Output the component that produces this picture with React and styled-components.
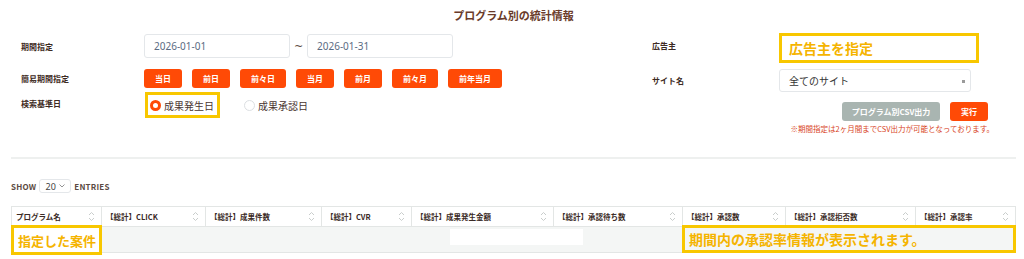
import styled, { createGlobalStyle } from "styled-components";

const GlobalStyle = createGlobalStyle`
  html, body {
    margin: 0;
    padding: 0;
    background: #ffffff;
  }
  body {
    font-family: "Noto Sans CJK JP", "Noto Sans", sans-serif;
    color: #3d2a22;
  }
`;

const ORANGE = "#ff4a06";
const YELLOW = "#f8c700";
const YELLOW_TEXT = "#f5b400";

const Page = styled.div`
  width: 1024px;
  height: 259px;
  box-sizing: border-box;
  padding: 7px 8px 0 11px;
  overflow: hidden;
`;

const Title = styled.h1`
  margin: 0;
  font-size: 11px;
  line-height: 16px;
  font-weight: 700;
  text-align: center;
  color: #6a3b2a;
`;

const Form = styled.div`
  display: flex;
  margin-top: 10px;
`;

const LeftPanel = styled.div`
  width: 641px;
  box-sizing: border-box;
  padding-left: 10px;
  display: flex;
  flex-direction: column;
`;

const RightPanel = styled.div`
  flex: 1;
  display: flex;
  flex-direction: column;
`;

const Row = styled.div`
  display: grid;
  grid-template-columns: ${(p) => p.$label}px 1fr;
  align-items: center;
  margin-top: ${(p) => p.$mt || 0}px;
`;

const Label = styled.span`
  font-size: 8px;
  font-weight: 700;
  color: #3d2a22;
  margin-top: ${(p) => p.$nudge || 0}px;
`;

const DateRange = styled.div`
  display: flex;
  align-items: center;
  gap: 4px;
`;

const DateInput = styled.div`
  width: 146px;
  height: 24px;
  box-sizing: border-box;
  border: 1px solid #e4e7ea;
  border-radius: 3px;
  padding-left: 9px;
  display: flex;
  align-items: center;
  font-family: "Noto Sans", sans-serif;
  font-size: 10px;
  color: #5b6b82;
`;

const Tilde = styled.span`
  width: 9px;
  text-align: center;
  font-family: "DejaVu Sans", sans-serif;
  font-size: 11px;
  color: #5a4a40;
`;

const QuickButtons = styled.div`
  display: flex;
  gap: 10px;
`;

const OrangeButton = styled.button`
  all: unset;
  box-sizing: border-box;
  height: 19px;
  padding: 0 ${(p) => p.$px || 11}px;
  background: ${ORANGE};
  border-radius: 3px;
  color: #ffffff;
  font-size: 8px;
  font-weight: 700;
  display: flex;
  align-items: center;
  justify-content: center;
  white-space: nowrap;
`;

const RadioGroup = styled.div`
  display: flex;
  align-items: center;
  gap: 24px;
  margin-left: 1px;
`;

const Highlight = styled.div`
  box-sizing: border-box;
  border: 3px solid ${YELLOW};
  background: #ffffff;
`;

const RadioBox = styled(Highlight)`
  height: 26px;
  display: flex;
  align-items: center;
  padding: 0 3px 0 2px;
`;

const RadioItem = styled.label`
  display: flex;
  align-items: center;
  gap: 3px;
  font-size: 10px;
  color: #4a3530;
  white-space: nowrap;
`;

const RadioDot = styled.span`
  width: 11px;
  height: 11px;
  flex: none;
  box-sizing: border-box;
  border-radius: 50%;
  border: ${(p) => (p.$checked ? `3px solid ${ORANGE}` : "1px solid #dcdfe2")};
  background: #ffffff;
`;

const AdvertiserBox = styled(Highlight)`
  width: 200px;
  height: 30px;
  display: flex;
  align-items: center;
  padding-left: 7px;
  font-size: 14px;
  font-weight: 700;
  color: ${YELLOW_TEXT};
`;

const Select = styled.div`
  width: 192px;
  height: 23px;
  box-sizing: border-box;
  border: 1px solid #e4e7ea;
  border-radius: 3px;
  display: flex;
  align-items: center;
  justify-content: space-between;
  padding: 0 5px 0 9px;
  font-size: 10px;
  color: #333333;
`;

const TinyArrow = styled.span`
  width: 3px;
  height: 3px;
  background: #9a9a9a;
  margin-top: 1px;
`;

const Actions = styled.div`
  display: flex;
  justify-content: flex-end;
  gap: 10px;
  margin-top: 10px;
  padding-right: 28px;
`;

const GrayButton = styled(OrangeButton)`
  background: #a9b5b1;
  width: 98px;
  padding: 0;
`;

const Note = styled.p`
  margin: 3px 0 0;
  padding-right: 22px;
  text-align: right;
  font-size: 7.5px;
  line-height: 10px;
  color: #d8431c;
`;

const Divider = styled.hr`
  border: 0;
  height: 2px;
  background: #eef0ef;
  margin: 23px 0 0;
`;

const ShowRow = styled.div`
  display: flex;
  align-items: center;
  gap: 3px;
  margin-top: 20px;
  height: 14px;
  font-size: 8px;
  font-weight: 700;
  color: #5b4a42;
  letter-spacing: 0.2px;
`;

const PageSize = styled.div`
  width: 32px;
  height: 14px;
  box-sizing: border-box;
  border: 1px solid #e4e7ea;
  border-radius: 3px;
  display: flex;
  align-items: center;
  justify-content: center;
  gap: 3px;
  font-family: "Noto Sans", sans-serif;
  font-weight: 400;
  font-size: 9px;
  color: #444;
`;

const TableWrap = styled.div`
  position: relative;
  width: 1004px;
  margin-top: 13px;
`;

const Table = styled.table`
  width: 1004px;
  border-collapse: collapse;
  table-layout: fixed;
`;

const Th = styled.th`
  height: 20px;
  box-sizing: border-box;
  border: 1px solid #e3e6e5;
  padding: 0 0 0 4px;
  text-align: left;
  font-size: 7.5px;
  font-weight: 700;
  color: #3a2a25;
  white-space: nowrap;
`;

const ThInner = styled.div`
  display: flex;
  align-items: center;
  justify-content: space-between;
  padding-right: 6px;
`;

const Td = styled.td`
  height: 23px;
  background: #f4f6f5;
  border-bottom: 1px solid #e3e6e5;
`;

const Overlay = styled.div`
  position: absolute;
  left: ${(p) => p.$x}px;
  top: ${(p) => p.$y}px;
  width: ${(p) => p.$w}px;
  height: ${(p) => p.$h}px;
  box-sizing: border-box;
`;

const Callout = styled(Overlay)`
  border: 3px solid ${YELLOW};
  background: ${(p) => p.$bg || "transparent"};
  display: flex;
  align-items: center;
  padding-left: ${(p) => p.$pl || 4}px;
  font-size: ${(p) => p.$fs}px;
  font-weight: 700;
  color: ${YELLOW_TEXT};
  white-space: nowrap;
`;

const Blank = styled(Overlay)`
  background: #ffffff;
`;

const SortIcon = () => (
  <svg width="7" height="11" viewBox="0 0 7 11" fill="none">
    <path d="M1 4 L3.5 1.5 L6 4" stroke="#c9cdcc" strokeWidth="1" />
    <path d="M1 7 L3.5 9.5 L6 7" stroke="#c9cdcc" strokeWidth="1" />
  </svg>
);

const columns = [
  { title: "プログラム名", w: 90 },
  { title: "【総計】CLICK", w: 104 },
  { title: "【総計】成果件数", w: 116 },
  { title: "【総計】CVR", w: 90 },
  { title: "【総計】成果発生金額", w: 142 },
  { title: "【総計】承認待ち数", w: 129 },
  { title: "【総計】承認数", w: 103 },
  { title: "【総計】承認拒否数", w: 130 },
  { title: "【総計】承認率", w: 100 },
];

const quick = ["当日", "前日", "前々日", "当月", "前月", "前々月", "前年当月"];

export default function App() {
  return (
    <>
      <GlobalStyle />
      <Page>
        <Title>プログラム別の統計情報</Title>
        <Form>
          <LeftPanel>
            <Row $label={123} $mt={1}>
              <Label>期間指定</Label>
              <DateRange>
                <DateInput>2026-01-01</DateInput>
                <Tilde>~</Tilde>
                <DateInput>2026-01-31</DateInput>
              </DateRange>
            </Row>
            <Row $label={123} $mt={11}>
              <Label>簡易期間指定</Label>
              <QuickButtons>
                {quick.map((q) => (
                  <OrangeButton key={q}>{q}</OrangeButton>
                ))}
              </QuickButtons>
            </Row>
            <Row $label={123} $mt={4}>
              <Label $nudge={-3}>検索基準日</Label>
              <RadioGroup>
                <RadioBox>
                  <RadioItem>
                    <RadioDot $checked />
                    成果発生日
                  </RadioItem>
                </RadioBox>
                <RadioItem>
                  <RadioDot />
                  成果承認日
                </RadioItem>
              </RadioGroup>
            </Row>
          </LeftPanel>
          <RightPanel>
            <Row $label={127}>
              <Label $nudge={-5}>広告主</Label>
              <AdvertiserBox>広告主を指定</AdvertiserBox>
            </Row>
            <Row $label={127} $mt={6}>
              <Label>サイト名</Label>
              <Select>
                全てのサイト
                <TinyArrow />
              </Select>
            </Row>
            <Actions>
              <GrayButton>プログラム別CSV出力</GrayButton>
              <OrangeButton>実行</OrangeButton>
            </Actions>
            <Note>※期間指定は2ヶ月間までCSV出力が可能となっております。</Note>
          </RightPanel>
        </Form>
        <Divider />
        <ShowRow>
          SHOW
          <PageSize>
            20
            <svg width="6" height="4" viewBox="0 0 6 4">
              <path d="M0.5 0.5 L3 3 L5.5 0.5" stroke="#888" fill="none" strokeWidth="0.9" />
            </svg>
          </PageSize>
          ENTRIES
        </ShowRow>
        <TableWrap>
          <Table>
            <colgroup>
              {columns.map((c) => (
                <col key={c.title} style={{ width: c.w }} />
              ))}
            </colgroup>
            <thead>
              <tr>
                {columns.map((c) => (
                  <Th key={c.title}>
                    <ThInner>
                      {c.title}
                      <SortIcon />
                    </ThInner>
                  </Th>
                ))}
              </tr>
            </thead>
            <tbody>
              <tr>
                {columns.map((c) => (
                  <Td key={c.title} />
                ))}
              </tr>
            </tbody>
          </Table>
          <Blank $x={439} $y={23} $w={133} $h={16} />
          <Callout $x={0} $y={19} $w={91} $h={30} $fs={13} $pl={4} $bg="#ffffff">
            指定した案件
          </Callout>
          <Callout $x={671} $y={19} $w={334} $h={28} $fs={14} $pl={4}>
            期間内の承認率情報が表示されます。
          </Callout>
        </TableWrap>
      </Page>
    </>
  );
}
